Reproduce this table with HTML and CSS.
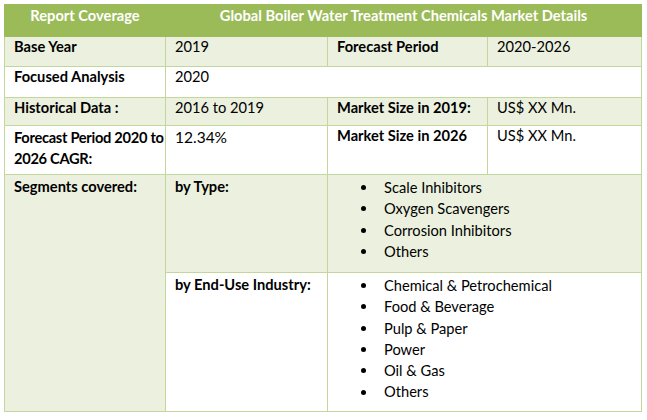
FILE: index.html
```html
<!DOCTYPE html>
<html>
<head>
<meta charset="utf-8">
<link rel="stylesheet" href="styles.css">
</head>
<body>
<table class="report">
  <colgroup>
    <col class="c1"><col class="c2"><col class="c3"><col class="c4">
  </colgroup>
  <thead>
    <tr class="head">
      <th>Report Coverage</th>
      <th colspan="3">Global Boiler Water Treatment Chemicals Market Details</th>
    </tr>
  </thead>
  <tbody>
    <tr class="shade r1">
      <td class="label">Base Year</td>
      <td>2019</td>
      <td class="label">Forecast Period</td>
      <td>2020-2026</td>
    </tr>
    <tr class="r2">
      <td class="label">Focused Analysis</td>
      <td colspan="3">2020</td>
    </tr>
    <tr class="shade r3">
      <td class="label">Historical Data :</td>
      <td>2016 to 2019</td>
      <td class="label">Market Size in 2019:</td>
      <td>US$ XX Mn.</td>
    </tr>
    <tr class="r4">
      <td class="label tall tight">Forecast Period 2020 to 2026 CAGR:</td>
      <td class="tall big">12.34%</td>
      <td class="label">Market Size in 2026</td>
      <td>US$ XX Mn.</td>
    </tr>
    <tr class="shade r5">
      <td class="label seg" rowspan="2">Segments covered:</td>
      <td class="label seg">by Type:</td>
      <td colspan="2" class="listcell">
        <ul class="bullets">
          <li>Scale Inhibitors</li>
          <li>Oxygen Scavengers</li>
          <li>Corrosion Inhibitors</li>
          <li>Others</li>
        </ul>
      </td>
    </tr>
    <tr class="r6">
      <td class="label seg">by End-Use Industry:</td>
      <td colspan="2" class="listcell">
        <ul class="bullets">
          <li>Chemical &amp; Petrochemical</li>
          <li>Food &amp; Beverage</li>
          <li>Pulp &amp; Paper</li>
          <li>Power</li>
          <li>Oil &amp; Gas</li>
          <li>Others</li>
        </ul>
      </td>
    </tr>
  </tbody>
</table>
</body>
</html>
```
FILE: styles.css
```css
html, body {
  margin: 0;
  padding: 0;
  background: #ffffff;
}

body {
  padding: 4px 0 0 4px;
  font-family: Lato, "Open Sans", "Liberation Sans", sans-serif;
  font-size: 14.67px;
  color: #000000;
}

.report {
  border-collapse: collapse;
  table-layout: fixed;
  width: 637px;
}

.c1 { width: 161px; }
.c2 { width: 162px; }
.c3 { width: 160px; }
.c4 { width: 154px; }

.report th,
.report td {
  border: 1px solid #c3d69b;
  vertical-align: top;
  text-align: left;
  padding: 0 2px 0 9px;
  line-height: 19px;
}

.head th {
  background: #9bbb59;
  border-color: #9bbb59;
  color: #ffffff;
  font-weight: bold;
  text-align: center;
  line-height: 21px;
  padding: 0 4px;
}

.shade td {
  background: #ebf1de;
}

.label {
  font-weight: bold;
}

.head { height: 32px; }
.r1 { height: 30px; }
.r2 { height: 31px; }
.r3 { height: 28px; }
.r4 { height: 49px; }
.r5 { height: 98px; }
.r6 { height: 139px; }

.report td.tall {
  line-height: 21px;
  padding-top: 1px;
}

.report td.tight {
  letter-spacing: -0.3px;
  padding-right: 0;
}

.report td.big {
  font-size: 15.5px;
}

.report td.seg {
  line-height: 21px;
  padding-top: 1px;
}

.report td.listcell {
  padding: 2px 6px 0 0;
}

.bullets {
  list-style: none;
  margin: 0;
  padding: 0 0 0 33px;
}

.bullets li {
  display: flex;
  align-items: center;
  line-height: 21.3px;
}

.bullets li::before {
  content: "";
  flex: none;
  width: 5px;
  height: 5px;
  border-radius: 50%;
  background: #000000;
  margin-right: 18px;
}
```
